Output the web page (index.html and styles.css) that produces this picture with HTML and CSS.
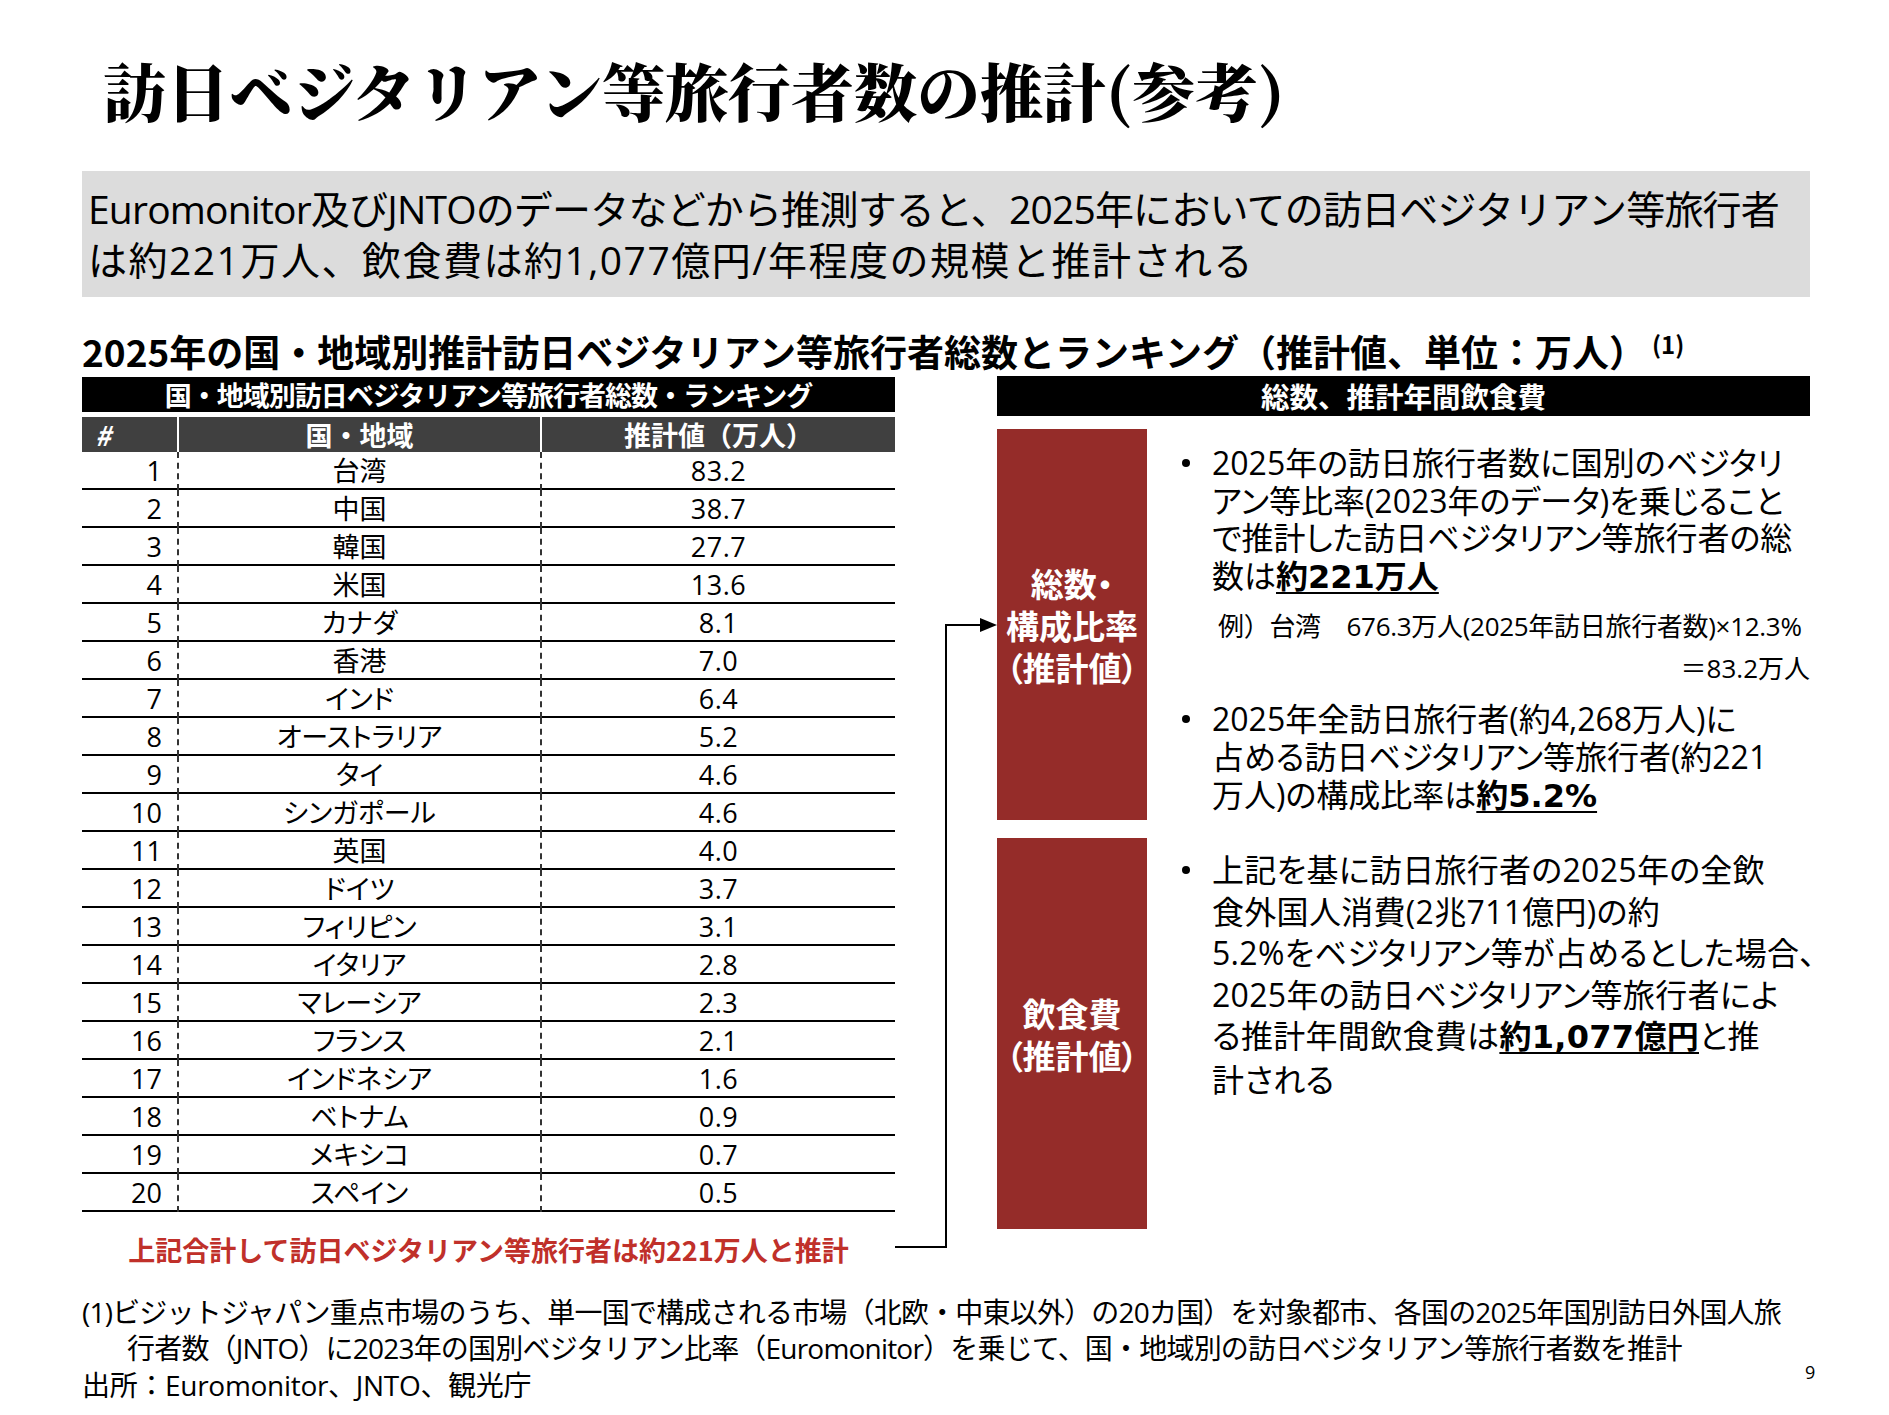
FILE: index.html
```html
<!DOCTYPE html>
<html lang="ja">
<head>
<meta charset="utf-8">
<title>訪日ベジタリアン等旅行者数の推計(参考)</title>
<link rel="stylesheet" href="styles.css">
</head>
<body>
<div class="slide">
  <h1 class="title">訪日ベジタリアン等旅行者数の推計(参考)</h1>
  <div class="summary"><span class="sum1">Euromonitor及びJNTOのデータなどから推測すると、2025年においての訪日ベジタリアン等旅行者</span><br><span class="sum2">は約221万人、飲食費は約1,077億円/年程度の規模と推計される</span></div>
  <h2 class="subtitle">2025年の国・地域別推計訪日ベジタリアン等旅行者総数とランキング（推計値、単位：万人）<sup class="ref">(1)</sup></h2>

  <div class="main">
    <section class="left">
      <div class="bar bar-left">国・地域別訪日ベジタリアン等旅行者総数・ランキング</div>
      <div class="thead">
        <div class="th th-num">#</div>
        <div class="th">国・地域</div>
        <div class="th">推計値（万人）</div>
      </div>
      <div class="tbody">
        <div class="row"><div class="c1">1</div><div class="c2">台湾</div><div class="c3">83.2</div></div>
        <div class="row"><div class="c1">2</div><div class="c2">中国</div><div class="c3">38.7</div></div>
        <div class="row"><div class="c1">3</div><div class="c2">韓国</div><div class="c3">27.7</div></div>
        <div class="row"><div class="c1">4</div><div class="c2">米国</div><div class="c3">13.6</div></div>
        <div class="row"><div class="c1">5</div><div class="c2">カナダ</div><div class="c3">8.1</div></div>
        <div class="row"><div class="c1">6</div><div class="c2">香港</div><div class="c3">7.0</div></div>
        <div class="row"><div class="c1">7</div><div class="c2">インド</div><div class="c3">6.4</div></div>
        <div class="row"><div class="c1">8</div><div class="c2">オーストラリア</div><div class="c3">5.2</div></div>
        <div class="row"><div class="c1">9</div><div class="c2">タイ</div><div class="c3">4.6</div></div>
        <div class="row"><div class="c1">10</div><div class="c2">シンガポール</div><div class="c3">4.6</div></div>
        <div class="row"><div class="c1">11</div><div class="c2">英国</div><div class="c3">4.0</div></div>
        <div class="row"><div class="c1">12</div><div class="c2">ドイツ</div><div class="c3">3.7</div></div>
        <div class="row"><div class="c1">13</div><div class="c2">フィリピン</div><div class="c3">3.1</div></div>
        <div class="row"><div class="c1">14</div><div class="c2">イタリア</div><div class="c3">2.8</div></div>
        <div class="row"><div class="c1">15</div><div class="c2">マレーシア</div><div class="c3">2.3</div></div>
        <div class="row"><div class="c1">16</div><div class="c2">フランス</div><div class="c3">2.1</div></div>
        <div class="row"><div class="c1">17</div><div class="c2">インドネシア</div><div class="c3">1.6</div></div>
        <div class="row"><div class="c1">18</div><div class="c2">ベトナム</div><div class="c3">0.9</div></div>
        <div class="row"><div class="c1">19</div><div class="c2">メキシコ</div><div class="c3">0.7</div></div>
        <div class="row"><div class="c1">20</div><div class="c2">スペイン</div><div class="c3">0.5</div></div>
      </div>
      <p class="total">上記合計して訪日ベジタリアン等旅行者は約221万人と推計</p>
    </section>

    <svg class="connector" width="1728" height="900" viewBox="0 0 1728 900" aria-hidden="true">
      <polyline points="813,871 864,871 864,249 899,249" fill="none" stroke="#000" stroke-width="2"/>
      <polygon points="898,242 915,249 898,256" fill="#000"/>
    </svg>

    <section class="right">
      <div class="bar bar-right">総数、推計年間飲食費</div>
      <div class="prow prow-first">
        <div class="redbox">総数・<br>構成比率<br>（推計値）</div>
        <div class="pcontent pc1">
          <div class="bullet b12">
            <span class="dot"></span>
            <p>2025年の訪日旅行者数に国別のベジタリ<br>アン等比率(2023年のデータ)を乗じること<br>で推計した訪日ベジタリアン等旅行者の総<br>数は<strong>約221万人</strong></p>
          </div>
          <div class="example">
            <p class="ex1">例）台湾　676.3万人(2025年訪日旅行者数)×12.3%</p>
            <p class="ex2">＝83.2万人</p>
          </div>
          <div class="bullet b12 b2">
            <span class="dot"></span>
            <p>2025年全訪日旅行者(約4,268万人)に<br>占める訪日ベジタリアン等旅行者(約221<br>万人)の構成比率は<strong>約5.2%</strong></p>
          </div>
        </div>
      </div>
      <div class="prow">
        <div class="redbox">飲食費<br>（推計値）</div>
        <div class="pcontent pc2">
          <div class="bullet b3">
            <span class="dot"></span>
            <p>上記を基に訪日旅行者の2025年の全飲<br>食外国人消費(2兆711億円)の約<br>5.2%をベジタリアン等が占めるとした場合、<br>2025年の訪日ベジタリアン等旅行者によ<br>る推計年間飲食費は<strong>約1,077億円</strong>と推<br>計される</p>
          </div>
        </div>
      </div>
    </section>
  </div>

  <div class="notes">
    <p class="note-item">(1)ビジットジャパン重点市場のうち、単一国で構成される市場（北欧・中東以外）の20カ国）を対象都市、各国の2025年国別訪日外国人旅<br>行者数（JNTO）に2023年の国別ベジタリアン比率（Euromonitor）を乗じて、国・地域別の訪日ベジタリアン等旅行者数を推計</p>
    <p class="source">出所：Euromonitor、JNTO、観光庁</p>
  </div>
  <div class="pagenum">9</div>
</div>
</body>
</html>
```
FILE: styles.css
```css
html, body {
  margin: 0;
  padding: 0;
  background: #fff;
}
body {
  width: 1889px;
  height: 1415px;
  overflow: hidden;
  font-family: "Open Sans", "Noto Sans CJK JP", sans-serif;
  color: #000;
}
p { margin: 0; }

.slide {
  position: relative;
  box-sizing: border-box;
  width: 1889px;
  height: 1415px;
  padding: 50px 79px 0 82px;
}

.title {
  margin: 0 0 0 21px;
  height: 80px;
  line-height: 78px;
  font-family: "Noto Serif CJK JP", "Noto Sans CJK JP", serif;
  font-weight: 900;
  font-size: 63px;
  white-space: nowrap;
}

.summary {
  margin-top: 41px;
  box-sizing: border-box;
  height: 126px;
  padding: 12px 6px 0 6px;
  background: #dcdcdc;
  font-size: 39px;
  line-height: 51px;
  white-space: nowrap;
}
.sum1 { letter-spacing: -0.8px; }
.sum2 { letter-spacing: 1.5px; }

.subtitle {
  margin: 32px 0 0 0;
  font-family: "Noto Sans CJK JP", sans-serif;
  font-weight: 700;
  font-size: 37px;
  line-height: 44px;
  white-space: nowrap;
}
.subtitle .ref {
  font-size: 24px;
  vertical-align: 13px;
  line-height: 0;
  margin-left: 6px;
}

.main {
  position: relative;
  margin-top: 3px;
  display: grid;
  grid-template-columns: 813px 813px;
  column-gap: 102px;
  align-items: start;
}

.connector {
  position: absolute;
  left: 0;
  top: 0;
  pointer-events: none;
}

.bar {
  background: #000;
  color: #fff;
  font-family: "Noto Sans CJK JP", sans-serif;
  font-weight: 700;
  text-align: center;
  white-space: nowrap;
}
.bar-left {
  margin-top: 1px;
  height: 35px;
  line-height: 35px;
  font-size: 27px;
  letter-spacing: -1px;
}
.bar-right {
  height: 40px;
  line-height: 40px;
  font-size: 28.5px;
}

.thead {
  margin-top: 5px;
  display: grid;
  grid-template-columns: 95px 363px 355px;
  height: 35px;
  font-family: "Noto Sans CJK JP", sans-serif;
  font-weight: 700;
  font-size: 27px;
  color: #fff;
}
.th {
  background: #404040;
  text-align: center;
  line-height: 35px;
  border-left: 2px solid #fff;
  white-space: nowrap;
}
.th-num {
  border-left: 0;
  text-align: left;
  padding-left: 13px;
  font-style: italic;
}

.tbody {
  font-size: 27px;
  font-feature-settings: "palt";
}
.row {
  display: grid;
  grid-template-columns: 95px 363px 355px;
  box-sizing: border-box;
  height: 38px;
  border-bottom: 2px solid #000;
  line-height: 38px;
}
.c1 {
  text-align: right;
  padding-right: 15px;
}
.c2, .c3 {
  text-align: center;
  border-left: 2px dashed #333;
  white-space: nowrap;
}
.c3 { letter-spacing: 0.5px; }

.total {
  margin-top: 18px;
  height: 40px;
  line-height: 40px;
  text-align: center;
  color: #c0302a;
  font-family: "Noto Sans CJK JP", sans-serif;
  font-weight: 700;
  font-size: 27px;
  white-space: nowrap;
}

.prow {
  display: grid;
  grid-template-columns: 150px minmax(0, 1fr);
  height: 391px;
  margin-top: 18px;
}
.prow-first { margin-top: 13px; }

.redbox {
  background: #952c29;
  color: #fff;
  display: flex;
  align-items: center;
  justify-content: center;
  text-align: center;
  font-family: "Noto Sans CJK JP", sans-serif;
  font-weight: 700;
  font-size: 33px;
  line-height: 42px;
  font-feature-settings: "palt";
  white-space: nowrap;
}

.pcontent {
  padding-left: 35px;
  font-size: 32px;
  white-space: nowrap;
  font-feature-settings: "palt";
}
.pc1 { padding-top: 15px; }
.pc2 { padding-top: 11px; }

.bullet {
  display: grid;
  grid-template-columns: 30px auto;
}
.b12 p { line-height: 37.6px; }
.b3 p { line-height: 41.6px; }
.b3 p { letter-spacing: 0.3px; }
.bullet strong {
  font-family: "DejaVu Sans", "Noto Sans CJK JP", sans-serif;
  font-weight: 700;
  text-decoration: underline;
  text-decoration-thickness: 2px;
  text-underline-offset: 4px;
}
.dot {
  width: 8px;
  height: 8px;
  border-radius: 50%;
  background: #000;
  margin-top: 15px;
}
.b3 .dot { margin-top: 17px; }
.b2 { margin-top: 11px; }

.example {
  margin-top: 9px;
  font-size: 26px;
  line-height: 42px;
  font-feature-settings: normal;
}
.ex1 { padding-left: 36px; letter-spacing: -0.3px; }
.ex2 { text-align: right; }

.notes {
  margin-top: 24px;
  font-size: 28px;
  line-height: 36.3px;
  white-space: nowrap;
}
.note-item {
  padding-left: 45px;
  text-indent: -45px;
  letter-spacing: -0.8px;
}
.source { letter-spacing: -0.3px; }

.pagenum {
  position: absolute;
  left: 1805px;
  top: 1360px;
  font-size: 18px;
  line-height: 24px;
}
```
